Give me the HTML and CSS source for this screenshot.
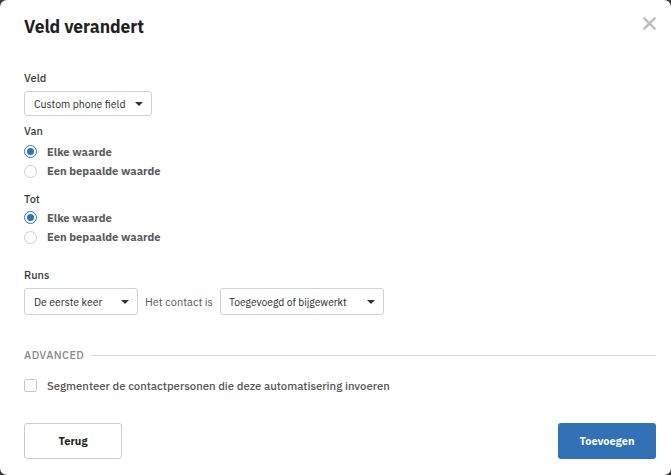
FILE: index.html
```html
<!DOCTYPE html>
<html lang="nl">
<head>
<meta charset="utf-8">
<title>Veld verandert</title>
<link rel="stylesheet" href="styles.css">
</head>
<body>
<div class="modal">
  <div class="header">
    <h1 class="title">Veld verandert</h1>
    <svg class="close" width="13" height="13" viewBox="0 0 13 13"><path d="M1.5 1.5 L11.5 11.5 M11.5 1.5 L1.5 11.5" stroke="#bdbdbd" stroke-width="2.4" stroke-linecap="square"/></svg>
  </div>

  <div class="label label-first">Veld</div>
  <div class="select select-veld"><span class="select-text">Custom phone field</span><span class="caret"></span></div>

  <div class="label label-van">Van</div>
  <div class="radios radios-van">
    <div class="radio-row"><span class="radio checked"></span><span class="radio-label">Elke waarde</span></div>
    <div class="radio-row"><span class="radio"></span><span class="radio-label">Een bepaalde waarde</span></div>
  </div>

  <div class="label label-tot">Tot</div>
  <div class="radios radios-tot">
    <div class="radio-row"><span class="radio checked"></span><span class="radio-label">Elke waarde</span></div>
    <div class="radio-row"><span class="radio"></span><span class="radio-label">Een bepaalde waarde</span></div>
  </div>

  <div class="label label-runs">Runs</div>
  <div class="runs-row">
    <div class="select select-runs"><span class="select-text">De eerste keer</span><span class="caret"></span></div>
    <span class="runs-text">Het contact is</span>
    <div class="select select-contact"><span class="select-text">Toegevoegd of bijgewerkt</span><span class="caret"></span></div>
  </div>

  <div class="advanced">
    <span class="advanced-text">ADVANCED</span>
    <span class="advanced-line"></span>
  </div>

  <div class="check-row"><span class="checkbox"></span><span class="check-label">Segmenteer de contactpersonen die deze automatisering invoeren</span></div>

  <div class="footer">
    <button class="btn btn-back">Terug</button>
    <button class="btn btn-primary">Toevoegen</button>
  </div>
</div>
</body>
</html>
```
FILE: styles.css
```css
html, body {
  margin: 0;
  padding: 0;
}
body {
  background: #3b3b3b;
  font-family: "IBM Plex Sans", Roboto, "Noto Sans", sans-serif;
  width: 671px;
  height: 475px;
  overflow: hidden;
}
.modal {
  box-sizing: border-box;
  width: 671px;
  height: 475px;
  background: #fff;
  border-radius: 7px;
  padding: 0 15px 16px 24px;
  display: flex;
  flex-direction: column;
}
.header {
  height: 54px;
  display: flex;
  justify-content: space-between;
  align-items: flex-start;
}
.title {
  margin: 17px 0 0 0;
  font-size: 17.5px;
  line-height: 20px;
  font-weight: 700;
  color: #1f1f1f;
  letter-spacing: -0.1px;
}
.close {
  margin-top: 17px;
}
.label {
  font-size: 11px;
  line-height: 14px;
  font-weight: 500;
  color: #3c3c3c;
}
.label-first { margin-top: 17px; }
.label-van { margin-top: 8px; }
.label-tot { margin-top: 11px; }
.label-runs { margin-top: 21px; }

.select {
  box-sizing: border-box;
  height: 25px;
  border: 1px solid #cfd3d8;
  border-radius: 3px;
  display: flex;
  align-items: center;
  justify-content: space-between;
  padding: 0 8px 0 9px;
  font-size: 10.5px;
  color: #2b2b2b;
  background: #fff;
}
.select-veld {
  width: 128px;
  margin-top: 6px;
}
.caret {
  width: 0;
  height: 0;
  border-left: 4px solid transparent;
  border-right: 4px solid transparent;
  border-top: 4px solid #333;
}
.radios {
  display: flex;
  flex-direction: column;
}
.radios-van { margin-top: 4px; }
.radios-tot { margin-top: 2px; }
.radio-row {
  height: 19.5px;
  display: flex;
  align-items: center;
}
.radio {
  box-sizing: border-box;
  width: 13px;
  height: 13px;
  border-radius: 50%;
  border: 1px solid #cccccc;
  background: #fff;
  margin-right: 10px;
  position: relative;
}
.radio.checked {
  border: 1.5px solid #3371b7;
}
.radio.checked::after {
  content: "";
  position: absolute;
  left: 1.5px;
  top: 1.5px;
  width: 7px;
  height: 7px;
  border-radius: 50%;
  background: #3371b7;
}
.radio-label {
  font-size: 11.2px;
  font-weight: 700;
  color: #5a5a5a;
}
.runs-row {
  margin-top: 6px;
  display: flex;
  align-items: center;
}
.select-runs {
  width: 114px;
  height: 27px;
}
.select-contact {
  width: 164px;
  height: 27px;
  font-size: 10.3px;
  padding-left: 8px;
}
.runs-text {
  font-size: 11px;
  color: #555;
  margin: 0 7px 0 7px;
}
.advanced {
  margin-top: 33px;
  display: flex;
  align-items: center;
  height: 14px;
}
.advanced-text {
  font-size: 11px;
  font-weight: 500;
  color: #8a8a8a;
  letter-spacing: 0.4px;
}
.advanced-line {
  flex: 1;
  height: 1px;
  background: #d4d7dc;
  margin-left: 7px;
}
.check-row {
  margin-top: 13px;
  height: 20px;
  display: flex;
  align-items: center;
}
.checkbox {
  box-sizing: border-box;
  width: 13px;
  height: 13px;
  border: 1px solid #c8c8c8;
  border-radius: 2px;
  margin-right: 10px;
}
.check-label {
  font-size: 11.3px;
  font-weight: 500;
  color: #555;
}
.footer {
  margin-top: auto;
  display: flex;
  justify-content: space-between;
}
.btn {
  box-sizing: border-box;
  height: 36px;
  border-radius: 3px;
  font-family: inherit;
  font-size: 11px;
  font-weight: 700;
  cursor: pointer;
}
.btn-back {
  width: 98px;
  background: #fff;
  border: 1px solid #c9cdd3;
  color: #222;
}
.btn-primary {
  width: 98px;
  background: #3371b7;
  border: none;
  color: #fff;
}
```
